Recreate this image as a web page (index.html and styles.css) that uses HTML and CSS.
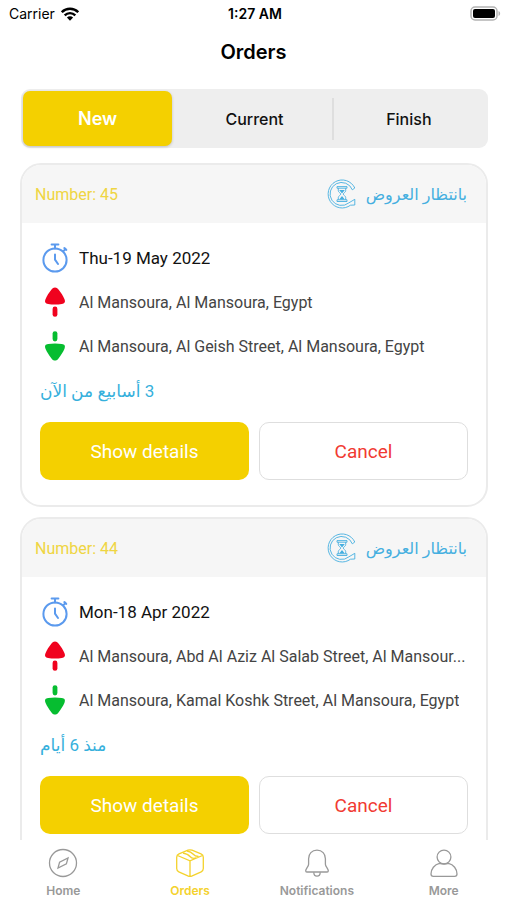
FILE: index.html
```html
<!DOCTYPE html>
<html lang="en">

<head>
    <meta charset="UTF-8">
    <meta name="viewport" content="width=device-width, initial-scale=1">
    <title>Orders</title>
    <link rel="stylesheet" href="styles.css">
</head>

<body>
    <!-- shared icons -->
    <svg class="sprite" aria-hidden="true">
        <symbol id="i-waiting" viewBox="0 0 30 30">
            <g fill="none" stroke="currentColor" stroke-width="0.9">
                <path d="M27.800 9A14 14 0 1 0 23.500 26.200L27.800 26V20.300L21.800 23.900A11.500 11.500 0 1 1 25.300 10.800Z" />
                <path d="M10 7.600h10v1.600H10zM10 20.800h10v1.700H10zM11.300 9.200v2.500c0 1.600 2.400 2.200 2.400 3.400s-2.400 1.800-2.400 3.400v2.300M18.700 9.200v2.500c0 1.600-2.400 2.200-2.400 3.400s2.400 1.800 2.400 3.400v2.300" />
            </g>
            <path d="M12.200 11h5.600L15 14.400zM12.200 20.400L15 17l2.800 3.400z" fill="currentColor" />
        </symbol>
        <symbol id="i-timer" viewBox="0 0 28 30">
            <g fill="none" stroke="#5b9aee" stroke-width="2" stroke-linecap="round">
                <circle cx="14" cy="17" r="11.600" />
                <path d="M10.600 1.600h6.800M14 2v3.500M22.200 8.400l2.400-2.500M23.300 5.100l2 1.800M14 11.400v5.200l3 4.400" />
            </g>
        </symbol>
        <symbol id="i-from" viewBox="0 0 28 30">
            <path d="M14 .5c1.500 0 2.500.8 3.500 2.100 2.600 3.300 4.600 6.400 6 9.700 1.200 2.900-.1 4.300-2.600 4.600-4.600.7-9.200.7-13.800 0-2.500-.3-3.800-1.700-2.600-4.600 1.400-3.300 3.400-6.400 6-9.700C11.500 1.300 12.500.5 14 .5z" />
            <rect x="11.600" y="19.500" width="4.800" height="10.300" rx="2.400" />
        </symbol>
        <symbol id="i-to" viewBox="0 0 28 30">
            <use href="#i-from" transform="rotate(180 14 15)" width="28" height="30" />
        </symbol>
    </svg>

    <div class="status-bar">
        <div class="carrier">
            <span>Carrier</span>
            <svg width="18" height="14" viewBox="0 0 18 14" aria-hidden="true">
                <g fill="none" stroke="#000" stroke-width="2.400">
                    <path d="M.8 5.200a11.600 11.600 0 0 1 16.400 0" />
                    <path d="M3.700 8.300a7.500 7.500 0 0 1 10.600 0" />
                </g>
                <path d="M9 13.800L5.900 10.600a4.400 4.400 0 0 1 6.200 0z" />
            </svg>
        </div>
        <div class="time">1:27 AM</div>
        <svg class="battery" width="31" height="15" viewBox="0 0 31 15" aria-hidden="true">
            <rect x="1" y="1" width="26" height="13" rx="4" fill="#fff" stroke="#b3b3b3" stroke-width="1.500" />
            <rect x="3" y="3" width="22" height="9" rx="2" />
            <path d="M28.500 5v5c2.200-.9 2.200-4.100 0-5z" fill="#b3b3b3" />
        </svg>
    </div>

    <h1>Orders</h1>

    <div class="segments">
        <button class="segment active" type="button">New</button>
        <button class="segment" type="button">Current</button>
        <button class="segment divided" type="button">Finish</button>
    </div>

    <main class="orders">
        <article class="card">
            <header class="card-head">
                <span class="number">Number: 45</span>
                <span class="state">
                    <svg width="30" height="30" aria-hidden="true"><use href="#i-waiting" /></svg>
                    <span lang="ar" dir="rtl">بانتظار العروض</span>
                </span>
            </header>
            <div class="card-body">
                <div class="row date">
                    <svg class="icon" aria-hidden="true"><use href="#i-timer" /></svg>
                    <p>Thu-19 May 2022</p>
                </div>
                <div class="row">
                    <svg class="icon from" aria-hidden="true"><use href="#i-from" /></svg>
                    <p>Al Mansoura, Al Mansoura, Egypt</p>
                </div>
                <div class="row">
                    <svg class="icon to" aria-hidden="true"><use href="#i-to" /></svg>
                    <p>Al Mansoura, Al Geish Street, Al Mansoura, Egypt</p>
                </div>
                <p class="ago" lang="ar" dir="rtl">3 أسابيع من الآن</p>
                <div class="actions">
                    <button class="btn details" type="button">Show details</button>
                    <button class="btn cancel" type="button">Cancel</button>
                </div>
            </div>
        </article>

        <article class="card">
            <header class="card-head">
                <span class="number">Number: 44</span>
                <span class="state">
                    <svg width="30" height="30" aria-hidden="true"><use href="#i-waiting" /></svg>
                    <span lang="ar" dir="rtl">بانتظار العروض</span>
                </span>
            </header>
            <div class="card-body">
                <div class="row date">
                    <svg class="icon" aria-hidden="true"><use href="#i-timer" /></svg>
                    <p>Mon-18 Apr 2022</p>
                </div>
                <div class="row">
                    <svg class="icon from" aria-hidden="true"><use href="#i-from" /></svg>
                    <p>Al Mansoura, Abd Al Aziz Al Salab Street, Al Mansour...</p>
                </div>
                <div class="row">
                    <svg class="icon to" aria-hidden="true"><use href="#i-to" /></svg>
                    <p>Al Mansoura, Kamal Koshk Street, Al Mansoura, Egypt</p>
                </div>
                <p class="ago" lang="ar" dir="rtl">منذ 6 أيام</p>
                <div class="actions">
                    <button class="btn details" type="button">Show details</button>
                    <button class="btn cancel" type="button">Cancel</button>
                </div>
            </div>
        </article>
    </main>

    <nav class="tabs">
        <a href="#home" class="tab">
            <svg width="30" height="30" viewBox="0 0 30 30" aria-hidden="true">
                <circle cx="15" cy="15" r="13.500" />
                <path d="M20 10l-1.600 5.800-8.400 4.200 1.600-5.800z" />
            </svg>
            Home
        </a>
        <a href="#orders" class="tab current">
            <svg width="30" height="30" viewBox="0 0 30 30" aria-hidden="true">
                <path d="M13 2.200q2-.8 4 0l9 3.600q2.300 1 2.300 3.400v11.400q0 2.300-2.100 3.200l-9 4q-2.200.9-4.400 0l-9-4q-2.100-.9-2.100-3.200V9.200q0-2.400 2.300-3.400z" />
                <path d="M2.500 7.500L15 12.800l12.500-5.300M15 12.800v15.500M8 5q5 1 7 3.500t6 1.500M12 3q4 .6 6 3t5.500 2.500" />
            </svg>
            Orders
        </a>
        <a href="#notifications" class="tab">
            <svg width="30" height="30" viewBox="0 0 30 30" aria-hidden="true">
                <path d="M15 2.200c-5.200 0-8.400 3.600-8.400 8.500v5.500c0 2.500-2.900 4.300-2.900 6.600 0 .8.400 1.200 1.200 1.200h20.200c.8 0 1.200-.4 1.200-1.200 0-2.300-2.900-4.100-2.900-6.600v-5.500c0-4.900-3.200-8.500-8.400-8.500z" />
                <path d="M11.800 24.200c0 5.200 6.400 5.200 6.400 0" />
            </svg>
            Notifications
        </a>
        <a href="#more" class="tab">
            <svg width="30" height="30" viewBox="0 0 30 30" aria-hidden="true">
                <circle cx="15" cy="9" r="6.900" />
                <path d="M10.500 15.400C5.500 16.600 2 21 2 26c0 1.600.8 2.300 2.300 2.300h21.400c1.500 0 2.300-.7 2.300-2.300 0-5-3.500-9.400-8.500-10.600q-4.500 1.200-9 0z" />
            </svg>
            More
        </a>
    </nav>
</body>

</html>
```

FILE: styles.css
```css
* {
    box-sizing: border-box;
}

body {
    margin: 0;
    height: 100vh;
    display: flex;
    flex-direction: column;
    overflow: hidden;
    background: #fff;
    color: #000;
    font-family: Roboto, "DejaVu Sans", sans-serif;
}

button {
    font-family: inherit;
    border: 0;
    cursor: pointer;
}

p {
    margin: 0;
}

.sprite {
    display: none;
}

/* top */
.status-bar {
    display: grid;
    grid-template-columns: 1fr auto 1fr;
    align-items: center;
    height: 27px;
    padding: 0 6px 0 9px;
    font: 14px Inter, sans-serif;
}

.carrier {
    display: flex;
    align-items: center;
    gap: 6px;
}

.time {
    font-weight: 600;
}

.battery {
    justify-self: end;
}

h1 {
    margin: 0;
    font: 600 20px/50px Inter, sans-serif;
    text-align: center;
}

.segments {
    display: grid;
    grid-template-columns: repeat(3, 1fr);
    flex: none;
    height: 59px;
    margin: 12px 19px 15px 21px;
    padding: 2px;
    border-radius: 9px;
    background: #eee;
}

.segment {
    padding: 0;
    background: none;
    border-radius: 7px;
    color: #111;
    font: 500 16px Inter, sans-serif;
}

.segment.active {
    margin-right: 5px;
    background: #f4d000;
    box-shadow: 0 1px 3px rgba(0, 0, 0, 0.2);
    color: #fff;
    font-size: 18px;
    font-weight: 600;
}

.segment.divided {
    background: linear-gradient(#dedede, #dedede) left center / 2px 42px no-repeat;
    border-radius: 0;
}

/* list */
.orders {
    flex: 1;
    min-height: 0;
    padding: 0 19px 0 20px;
    overflow-y: auto;
    scrollbar-width: none;
}

.card {
    margin-bottom: 10px;
    border: 2px solid #ebebeb;
    border-radius: 21px;
    overflow: hidden;
}

.card-head {
    display: flex;
    align-items: center;
    justify-content: space-between;
    height: 58px;
    padding: 0 19px 0 13px;
    background: #f6f6f6;
    font-size: 16px;
}

.number {
    color: #efd542;
}

.state {
    display: flex;
    align-items: center;
    gap: 9px;
    color: #45afe0;
}

.card-body {
    padding: 13px 18px 25px;
}

.row {
    display: flex;
    align-items: center;
    gap: 10px;
    height: 44px;
    padding-left: 1px;
    color: #444;
    font-size: 16px;
}

.row p {
    overflow: hidden;
    text-overflow: ellipsis;
    white-space: nowrap;
}

.row.date {
    color: #111;
    font-size: 17px;
}

.icon {
    flex: none;
    width: 28px;
    height: 30px;
}

.from {
    fill: #f0021e;
}

.to {
    fill: #06bd30;
}

.ago {
    height: 54px;
    color: #36b0dc;
    font-size: 17px;
    line-height: 46px;
    text-align: left;
}

.actions {
    display: grid;
    grid-template-columns: 1fr 1fr;
    gap: 10px;
}

.btn {
    height: 58px;
    border-radius: 10px;
    font-size: 19px;
}

.details {
    background: #f4d000;
    color: #fff;
}

.cancel {
    border: 1px solid #dedede;
    background: #fff;
    color: #f13a32;
}

/* bottom tabs */
.tabs {
    display: grid;
    grid-template-columns: repeat(4, 1fr);
    flex: none;
    height: 60px;
    padding-top: 8px;
    background: #fff;
}

.tab {
    display: flex;
    flex-direction: column;
    align-items: center;
    gap: 5px;
    color: #999;
    font: 600 12px/16px Inter, sans-serif;
    text-decoration: none;
}

.tab svg {
    fill: none;
    stroke: currentColor;
    stroke-width: 1.3;
}

.tab.current {
    color: #f4d22c;
}
```
